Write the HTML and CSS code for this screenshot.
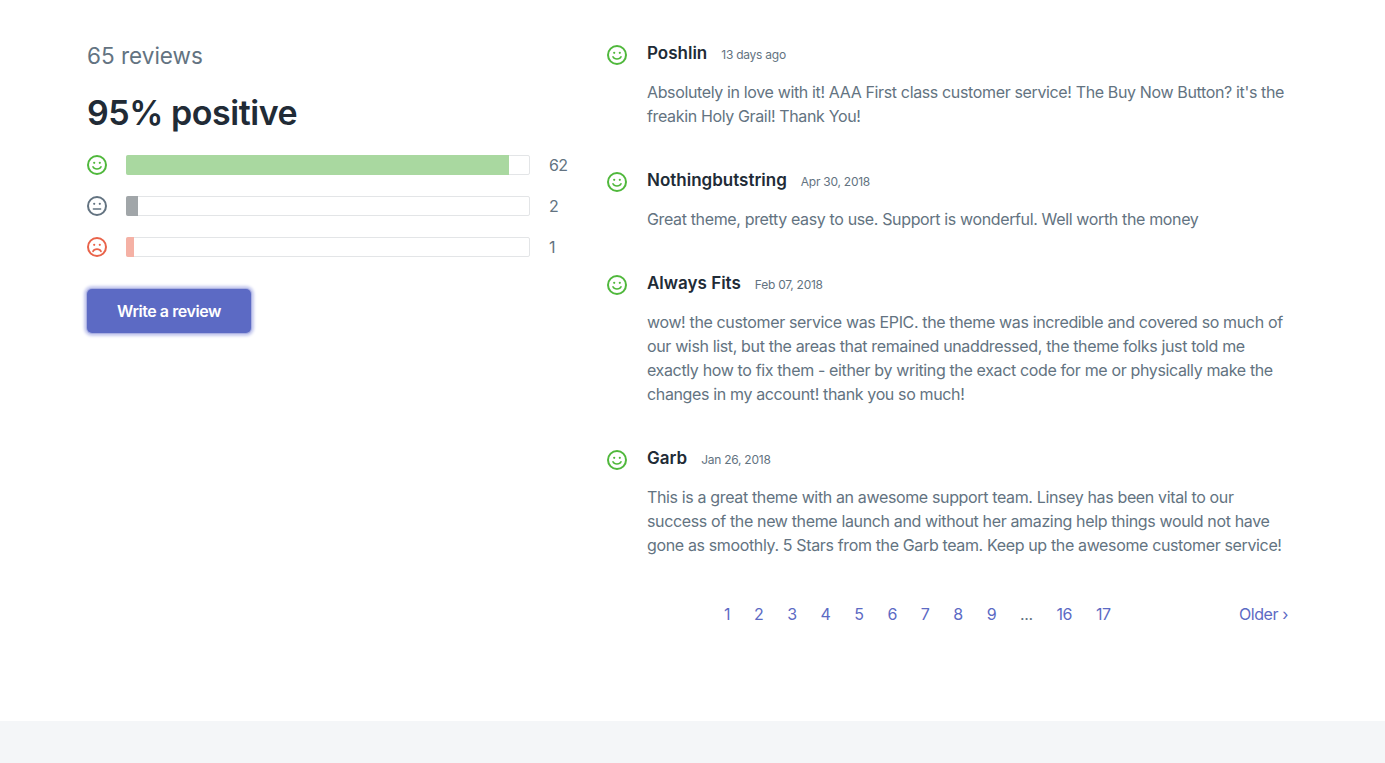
FILE: index.html
```html
<!DOCTYPE html>
<html lang="en">

<head>
    <meta charset="UTF-8">
    <title>Reviews</title>
    <link rel="stylesheet" href="styles.css">
</head>

<body>
    <div class="main">
        <div class="summary">
            <div class="count">65 reviews</div>
            <h2 class="percent">95% positive</h2>
            <div class="bars">
                <div class="bar-row">
                    <svg class="face face-good" viewBox="0 0 20 20"><circle cx="10" cy="10" r="9"/><circle class="eye" cx="7.2" cy="7.8" r="1.1"/><circle class="eye" cx="12.8" cy="7.8" r="1.1"/><path class="mouth" d="M6 11.8c1.2 3 6.8 3 8 0"/></svg>
                    <div class="bar"><div class="fill fill-good" style="width: 95.3%"></div></div>
                    <span class="bar-num">62</span>
                </div>
                <div class="bar-row">
                    <svg class="face face-ok" viewBox="0 0 20 20"><circle cx="10" cy="10" r="9"/><circle class="eye" cx="7.2" cy="7.8" r="1.1"/><circle class="eye" cx="12.8" cy="7.8" r="1.1"/><path class="mouth" d="M6.4 13h7.2"/></svg>
                    <div class="bar"><div class="fill fill-ok" style="width: 3%"></div></div>
                    <span class="bar-num">2</span>
                </div>
                <div class="bar-row">
                    <svg class="face face-bad" viewBox="0 0 20 20"><circle cx="10" cy="10" r="9"/><circle class="eye" cx="7.2" cy="7.8" r="1.1"/><circle class="eye" cx="12.8" cy="7.8" r="1.1"/><path class="mouth" d="M6 14.4c1.2-3 6.8-3 8 0"/></svg>
                    <div class="bar"><div class="fill fill-bad" style="width: 2%"></div></div>
                    <span class="bar-num">1</span>
                </div>
            </div>
            <a class="btn" href="#">Write a review</a>
        </div>

        <div class="reviews">
            <div class="review">
                <svg class="face face-good" viewBox="0 0 20 20"><circle cx="10" cy="10" r="9"/><circle class="eye" cx="7.2" cy="7.8" r="1.1"/><circle class="eye" cx="12.8" cy="7.8" r="1.1"/><path class="mouth" d="M6 11.8c1.2 3 6.8 3 8 0"/></svg>
                <div class="review-body">
                    <div class="review-head"><span class="name">Poshlin</span><span class="date">13 days ago</span></div>
                    <p>Absolutely in love with it! AAA First class customer service! The Buy Now Button? it's the freakin Holy Grail! Thank You!</p>
                </div>
            </div>
            <div class="review">
                <svg class="face face-good" viewBox="0 0 20 20"><circle cx="10" cy="10" r="9"/><circle class="eye" cx="7.2" cy="7.8" r="1.1"/><circle class="eye" cx="12.8" cy="7.8" r="1.1"/><path class="mouth" d="M6 11.8c1.2 3 6.8 3 8 0"/></svg>
                <div class="review-body">
                    <div class="review-head"><span class="name">Nothingbutstring</span><span class="date">Apr 30, 2018</span></div>
                    <p>Great theme, pretty easy to use. Support is wonderful. Well worth the money</p>
                </div>
            </div>
            <div class="review">
                <svg class="face face-good" viewBox="0 0 20 20"><circle cx="10" cy="10" r="9"/><circle class="eye" cx="7.2" cy="7.8" r="1.1"/><circle class="eye" cx="12.8" cy="7.8" r="1.1"/><path class="mouth" d="M6 11.8c1.2 3 6.8 3 8 0"/></svg>
                <div class="review-body">
                    <div class="review-head"><span class="name">Always Fits</span><span class="date">Feb 07, 2018</span></div>
                    <p>wow! the customer service was EPIC. the theme was incredible and covered so much of our wish list, but the areas that remained unaddressed, the theme folks just told me exactly how to fix them - either by writing the exact code for me or physically make the changes in my account! thank you so much!</p>
                </div>
            </div>
            <div class="review">
                <svg class="face face-good" viewBox="0 0 20 20"><circle cx="10" cy="10" r="9"/><circle class="eye" cx="7.2" cy="7.8" r="1.1"/><circle class="eye" cx="12.8" cy="7.8" r="1.1"/><path class="mouth" d="M6 11.8c1.2 3 6.8 3 8 0"/></svg>
                <div class="review-body">
                    <div class="review-head"><span class="name">Garb</span><span class="date">Jan 26, 2018</span></div>
                    <p>This is a great theme with an awesome support team. Linsey has been vital to our success of the new theme launch and without her amazing help things would not have gone as smoothly. 5 Stars from the Garb team. Keep up the awesome customer service!</p>
                </div>
            </div>
            <div class="pager">
                <div class="pages">
                    <a href="#">1</a>
                    <a href="#">2</a>
                    <a href="#">3</a>
                    <a href="#">4</a>
                    <a href="#">5</a>
                    <a href="#">6</a>
                    <a href="#">7</a>
                    <a href="#">8</a>
                    <a href="#">9</a>
                    <span class="gap">...</span>
                    <a href="#">16</a>
                    <a href="#">17</a>
                </div>
                <a class="older" href="#">Older ›</a>
            </div>
        </div>
    </div>
    <div class="footer"></div>
</body>

</html>
```

FILE: styles.css
```css
* {
    box-sizing: border-box;
}

body {
    margin: 0;
    padding: 0;
    background-color: #fff;
    color: #637381;
    font-family: "Inter", "Liberation Sans", sans-serif;
    height: 763px;
    overflow: hidden;
}

.main {
    display: flex;
    flex-direction: row;
    height: 721px;
    padding: 41px 97px 0 87px;
}

.summary {
    width: 480px;
    margin-right: 39px;
}

.count {
    font-size: 22.5px;
    line-height: 30px;
    color: #637381;
}

.percent {
    margin: 20px 0 0;
    font-size: 34px;
    line-height: 44px;
    font-weight: 600;
    letter-spacing: -0.45px;
    color: #212b36;
}

.bars {
    margin-top: 20px;
    display: flex;
    flex-direction: column;
    gap: 21px;
}

.bar-row {
    display: flex;
    flex-direction: row;
    align-items: center;
    height: 20px;
}

.face {
    width: 20px;
    height: 20px;
    flex-shrink: 0;
    fill: none;
    stroke-width: 2;
    stroke-linecap: round;
}

.face .eye {
    stroke: none;
}

.face .mouth {
    stroke-width: 1.6;
}

.face-good {
    stroke: #50b83c;
}

.face-good .eye {
    fill: #50b83c;
}

.face-ok {
    stroke: #637381;
}

.face-ok .eye {
    fill: #637381;
}

.face-bad {
    stroke: #e9634a;
}

.face-bad .eye {
    fill: #e9634a;
}

.bar {
    flex-shrink: 0;
    width: 404px;
    height: 20px;
    margin-left: 19px;
    border: 1px solid #e3e5e7;
    border-radius: 2px;
    background-color: #fff;
}

.fill {
    height: 20px;
    margin: -1px 0 0 -1px;
    border-radius: 2px 0 0 2px;
}

.fill-good {
    background-color: #a9d8a0;
}

.fill-ok {
    background-color: #a1a6a9;
}

.fill-bad {
    background-color: #f5b1a5;
}

.bar-num {
    margin-left: 19px;
    font-size: 16px;
    letter-spacing: -0.6px;
}

.btn {
    display: block;
    width: 164px;
    height: 44px;
    margin-top: 32px;
    border-radius: 5px;
    background-color: #5c6ac4;
    box-shadow: 0 0 0 1px #aab0e2, 0 0 3px 3px #c5c9ee;
    color: #fff;
    font-size: 16px;
    font-weight: 600;
    letter-spacing: -0.45px;
    line-height: 44px;
    text-align: center;
    text-decoration: none;
}

.reviews {
    flex: 1;
}

.review {
    display: flex;
    flex-direction: row;
    margin-bottom: 40px;
}

.review .face {
    margin-top: 4px;
    margin-left: 1px;
    margin-right: 20px;
}

.review-body {
    flex: 1;
}

.review-head {
    display: flex;
    flex-direction: row;
    align-items: baseline;
    line-height: 24px;
}

.name {
    font-size: 17px;
    font-weight: 600;
    color: #212b36;
}

.date {
    margin-left: 14px;
    font-size: 12px;
    letter-spacing: -0.25px;
    color: #637381;
}

.review p {
    margin: 13px 0 0;
    font-size: 16px;
    line-height: 24px;
    letter-spacing: -0.36px;
}

.pager {
    display: flex;
    flex-direction: row;
    justify-content: space-between;
    margin-left: 41px;
    margin-top: 45px;
    line-height: 24px;
    font-size: 16px;
    letter-spacing: -0.4px;
}

.pages {
    display: flex;
    flex-direction: row;
    gap: 23.85px;
    margin-left: 77px;
}

.pager a {
    color: #5c6ac4;
    text-decoration: none;
}

.footer {
    height: 42px;
    background-color: #f4f6f8;
}
```
